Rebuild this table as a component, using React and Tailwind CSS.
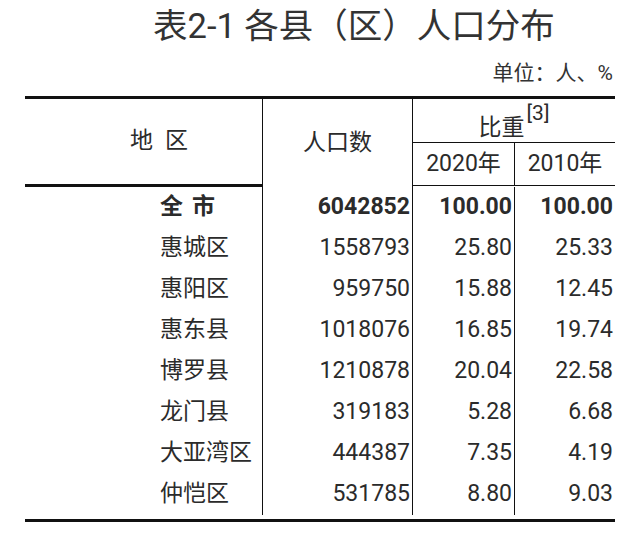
import React from "react";

const rows = [
  ["惠城区", "1558793", "25.80", "25.33"],
  ["惠阳区", "959750", "15.88", "12.45"],
  ["惠东县", "1018076", "16.85", "19.74"],
  ["博罗县", "1210878", "20.04", "22.58"],
  ["龙门县", "319183", "5.28", "6.68"],
  ["大亚湾区", "444387", "7.35", "4.19"],
  ["仲恺区", "531785", "8.80", "9.03"],
];

function Row({ label, pop, a, b, bold }) {
  return (
    <div className={`flex h-[41px] items-center ${bold ? "font-bold" : ""}`}>
      <div className="w-[237px] h-full flex items-center pl-[135px]">
        {bold ? (
          <span className="flex gap-[9px]">
            <span>全</span>
            <span>市</span>
          </span>
        ) : (
          label
        )}
      </div>
      <div className="w-[151px] h-full flex items-center justify-end pr-[2px] border-x border-[#111]">
        {pop}
      </div>
      <div className="w-[102px] h-full flex items-center justify-end pr-[2px] border-r border-[#111]">
        {a}
      </div>
      <div className="w-[100px] h-full flex items-center justify-end pr-[2px]">
        {b}
      </div>
    </div>
  );
}

export default function App() {
  return (
    <div
      className="w-[641px] h-[534px] bg-white text-[#2b2b2b] overflow-hidden"
      style={{ fontFamily: "Roboto, 'Noto Sans CJK SC', sans-serif" }}
    >
      {/* title */}
      <div className="h-[52px] leading-[52px] pl-[153px] text-[34.5px] text-[#333]">
        表2-1 各县（区）人口分布
      </div>

      {/* unit */}
      <div className="h-[44px] flex items-center justify-end pr-[28px] text-[21px] text-[#333]">
        单位：人、%
      </div>

      {/* table */}
      <div className="ml-[25px] w-[590px] border-t-[3px] border-[#111] text-[23px]">
        {/* header */}
        <div className="flex h-[88px]">
          <div className="w-[237px] h-full flex items-center pl-[105px] gap-[12px] border-b-[3px] border-[#111]">
            <span>地</span>
            <span>区</span>
          </div>
          <div className="w-[151px] h-full flex items-center justify-center border-x border-[#111]">
            人口数
          </div>
          <div className="w-[202px] h-full flex flex-col">
            <div className="h-[44px] flex items-center justify-center border-b border-[#111]">
              <span className="pt-[16px]">比重</span>
              <span className="text-[21px] self-start -mt-[1px] ml-[2px]">[3]</span>
            </div>
            <div className="flex h-[43px] border-b border-[#111]">
              <div className="w-[102px] flex items-center justify-center border-r border-[#111]">
                2020年
              </div>
              <div className="w-[100px] flex items-center justify-center">
                2010年
              </div>
            </div>
          </div>
        </div>

        {/* body */}
        <div className="pb-[4px] border-b-[3px] border-[#111]">
          <Row bold pop="6042852" a="100.00" b="100.00" />
          {rows.map((r) => (
            <Row key={r[0]} label={r[0]} pop={r[1]} a={r[2]} b={r[3]} />
          ))}
        </div>
      </div>
    </div>
  );
}
